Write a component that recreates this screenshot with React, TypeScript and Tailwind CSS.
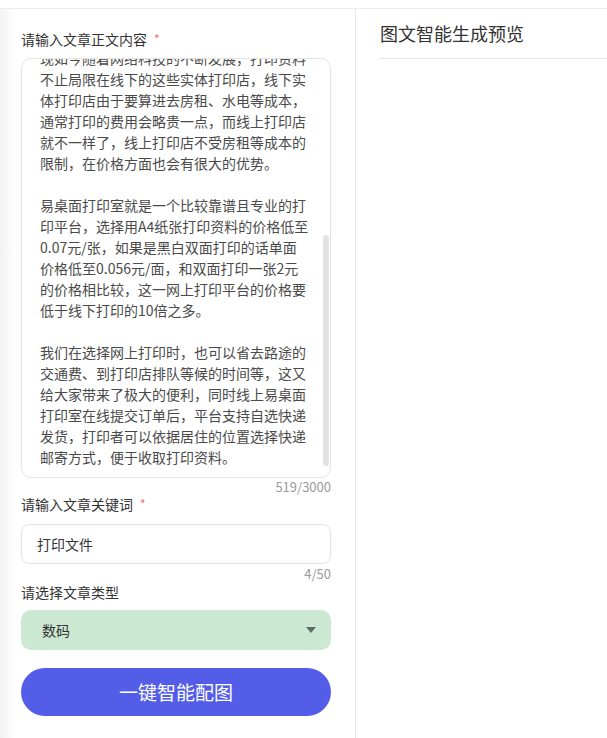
import React from "react";

const lines: string[] = [
  "现如今随着网络科技的不断发展，打印资料",
  "不止局限在线下的这些实体打印店，线下实",
  "体打印店由于要算进去房租、水电等成本，",
  "通常打印的费用会略贵一点，而线上打印店",
  "就不一样了，线上打印店不受房租等成本的",
  "限制，在价格方面也会有很大的优势。",
  "",
  "易桌面打印室就是一个比较靠谱且专业的打",
  "印平台，选择用A4纸张打印资料的价格低至",
  "0.07元/张，如果是黑白双面打印的话单面",
  "价格低至0.056元/面，和双面打印一张2元",
  "的价格相比较，这一网上打印平台的价格要",
  "低于线下打印的10倍之多。",
  "",
  "我们在选择网上打印时，也可以省去路途的",
  "交通费、到打印店排队等候的时间等，这又",
  "给大家带来了极大的便利，同时线上易桌面",
  "打印室在线提交订单后，平台支持自选快递",
  "发货，打印者可以依据居住的位置选择快递",
  "邮寄方式，便于收取打印资料。",
];

export default function App() {
  return (
    <div
      className="w-[607px] h-[738px] bg-white overflow-hidden pt-[8px]"
      style={{ fontFamily: '"Noto Sans CJK SC", "Noto Sans", sans-serif' }}
    >
      <div className="flex h-[730px] border-t border-[#ececec]">
        <div className="w-[356px] shrink-0 border-r border-[#e6e6e6] pl-[21px] pr-[24px] pt-[20px] bg-[linear-gradient(to_right,#f3f3f3,#ffffff_16px)]">
          <div className="flex items-center text-[14px] leading-[20px] text-[#333]">
            <span>请输入文章正文内容</span>
            <span className="ml-[7px] text-[12px] text-[#f56c6c]">*</span>
          </div>
          <div className="relative mt-[9px] h-[420px] rounded-[10px] border border-[#e4e4e4] bg-white overflow-hidden">
            <div className="-mt-[11px] pl-[18px] text-[14px] leading-[21px] text-[#4a4a4a]">
              {lines.map((l, i) => (
                <div key={i} className="h-[21px] whitespace-nowrap">
                  {l}
                </div>
              ))}
            </div>
            <div className="absolute left-[301px] top-[176px] w-[6px] h-[231px] rounded-[3px] bg-[#e2e2e2]" />
          </div>
          <div className="mt-[1px] text-right text-[13px] leading-[16px] text-[#999]">519/3000</div>
          <div className="flex items-center text-[14px] leading-[18px] text-[#333]">
            <span>请输入文章关键词</span>
            <span className="ml-[7px] text-[12px] text-[#f56c6c]">*</span>
          </div>
          <div className="mt-[11px] h-[40px] rounded-[8px] border border-[#e4e4e4] flex items-center pl-[15px] text-[14px] text-[#333]">
            打印文件
          </div>
          <div className="mt-[2px] text-right text-[13px] leading-[16px] text-[#999]">4/50</div>
          <div className="mt-[1px] text-[14px] leading-[18px] text-[#333]">请选择文章类型</div>
          <div className="mt-[9px] h-[40px] rounded-[10px] bg-[#cbe9d2] flex items-center justify-between pl-[21px] pr-[15px] text-[14px] text-[#333]">
            <span>数码</span>
            <svg width="10" height="6" viewBox="0 0 10 6">
              <path d="M0 0 L10 0 L5 6 Z" fill="#5f6b63" />
            </svg>
          </div>
          <button className="mt-[18px] w-full h-[48px] rounded-full bg-[#545de8] text-white text-[19px] flex items-center justify-center">
            一键智能配图
          </button>
        </div>
        <div className="flex-1 pl-[24px] pt-[11px]">
          <div className="text-[18px] leading-[26px] text-[#333] pb-[12px] border-b border-[#e4e4e4]">
            图文智能生成预览
          </div>
        </div>
      </div>
    </div>
  );
}
